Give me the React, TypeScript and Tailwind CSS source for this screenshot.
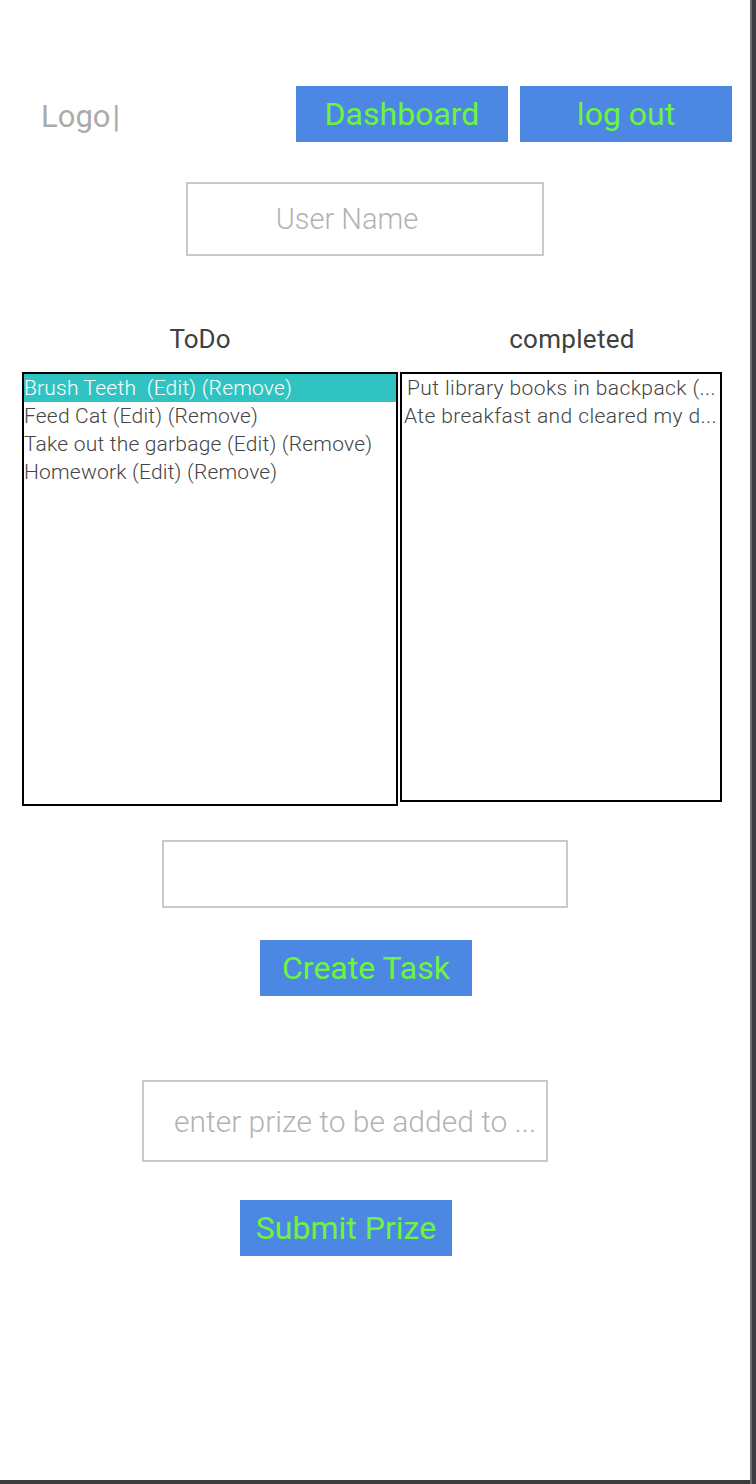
const todos = [
  { text: "Brush Teeth  (Edit) (Remove)", selected: true },
  { text: "Feed Cat (Edit) (Remove)", selected: false },
  { text: "Take out the garbage (Edit) (Remove)", selected: false },
  { text: "Homework (Edit) (Remove)", selected: false },
];

const completed = [
  { text: "Put library books in backpack (...", indent: true },
  { text: "Ate breakfast and cleared my d...", indent: false },
];

function BlueButton({ label }: { label: string }) {
  return (
    <button className="w-[212px] h-[56px] bg-[#4c88e3] text-[#6cf53c] text-[32px] leading-none flex items-center justify-center">
      {label}
    </button>
  );
}

export default function App() {
  return (
    <div
      className="w-[756px] h-[1484px] flex bg-white overflow-hidden"
      style={{ fontFamily: "Roboto, 'Noto Sans', sans-serif" }}
    >
      <div className="w-[750px] flex flex-col">
        <div className="flex-1 flex flex-col">
          {/* Header */}
          <div className="flex items-center pt-[86px] pl-[41px] pr-[18px]">
            <span className="text-[31px] text-[#ababab] leading-none mt-[4px]">
              Logo<span className="ml-[2px]">|</span>
            </span>
            <div className="ml-auto flex gap-3">
              <BlueButton label="Dashboard" />
              <BlueButton label="log out" />
            </div>
          </div>

          {/* User name */}
          <input
            className="mt-10 ml-[186px] w-[358px] h-[74px] border-2 border-[#c9c9c9] text-center pr-[36px] text-[29px] font-light placeholder:text-[#b3b3b3] outline-none"
            placeholder="User Name"
          />

          {/* Column headings */}
          <div className="flex mt-[71px] text-[26px] leading-[24px] text-[#404040]">
            <div className="w-[400px] text-center">ToDo</div>
            <div className="w-[344px] text-center tracking-[0.3px]">completed</div>
          </div>

          {/* Lists */}
          <div className="flex items-start mt-[21px] pl-[22px]">
            <div className="w-[376px] h-[434px] border-2 border-black">
              {todos.map((t) => (
                <div
                  key={t.text}
                  className={
                    t.selected
                      ? "h-[28px] bg-[#31c3c1] text-white text-[21px] tracking-[0.2px] leading-[28px] font-light whitespace-pre"
                      : "h-[28px] text-[#444] text-[21px] tracking-[0.2px] leading-[28px] font-light whitespace-pre"
                  }
                >
                  {t.text}
                </div>
              ))}
            </div>
            <div className="ml-[2px] w-[322px] h-[430px] border-2 border-black pl-[2px]">
              {completed.map((c) => (
                <div
                  key={c.text}
                  className={
                    c.indent
                      ? "h-[28px] pl-[3px] text-[#444] text-[21px] tracking-[0.4px] leading-[28px] font-light whitespace-pre overflow-hidden"
                      : "h-[28px] text-[#444] text-[21px] tracking-[0.4px] leading-[28px] font-light whitespace-pre overflow-hidden"
                  }
                >
                  {c.text}
                </div>
              ))}
            </div>
          </div>

          {/* New task */}
          <input className="mt-[34px] ml-[162px] w-[406px] h-[68px] border-2 border-[#c9c9c9] outline-none" />
          <div className="mt-8 ml-[260px]">
            <BlueButton label="Create Task" />
          </div>

          {/* Prize */}
          <input
            className="mt-[84px] ml-[142px] w-[406px] h-[82px] border-2 border-[#c9c9c9] pl-[30px] text-[30px] font-light placeholder:text-[#b3b3b3] outline-none"
            placeholder="enter prize to be added to ..."
          />
          <div className="mt-[38px] ml-[240px]">
            <BlueButton label="Submit Prize" />
          </div>
        </div>
        <div className="h-[4px] bg-[#3c3c3e]" />
      </div>
      <div className="w-[2px] bg-[#6e6e6e]" />
      <div className="w-[4px] bg-[#3c3c3e]" />
    </div>
  );
}
